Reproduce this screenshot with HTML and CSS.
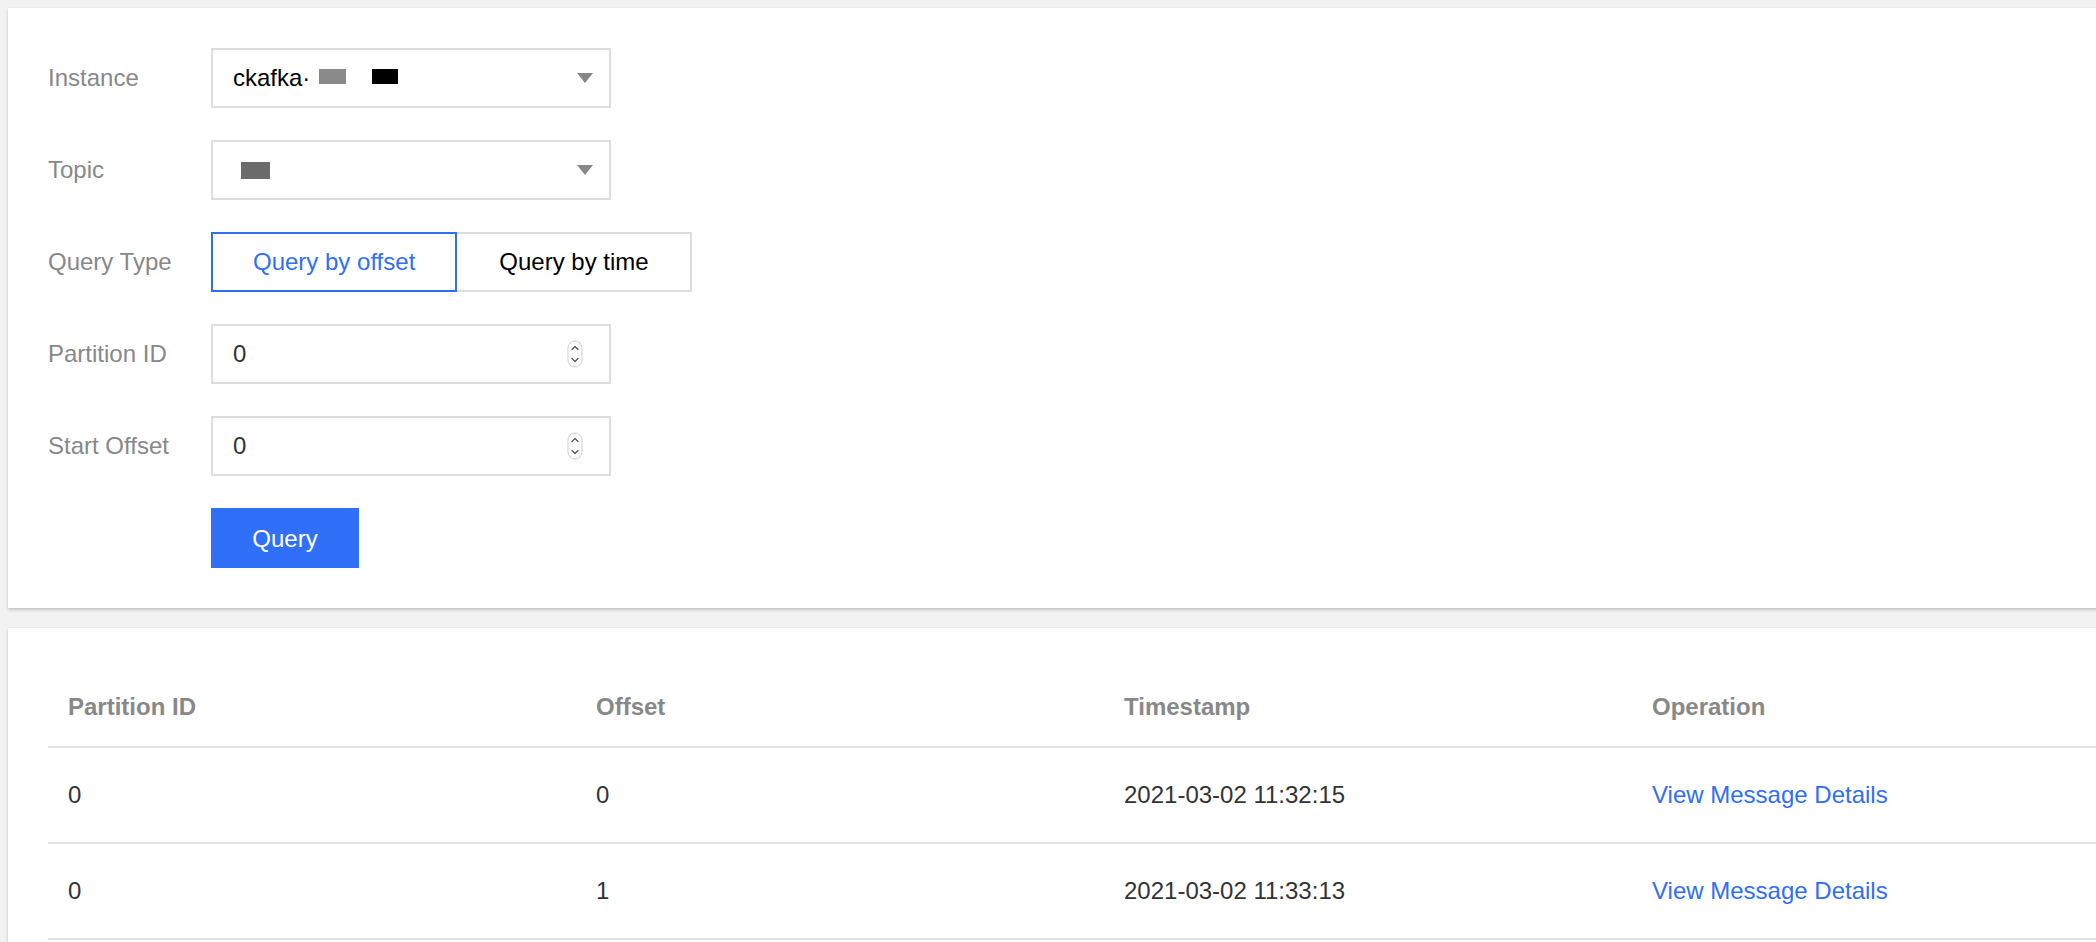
FILE: index.html
```html
<!DOCTYPE html>
<html lang="en">
<head>
<meta charset="utf-8">
<title>Message Query</title>
<link rel="stylesheet" href="styles.css">
</head>
<body>
<div class="page">
  <section class="card form-card">
    <div class="form-row">
      <span class="label">Instance</span>
      <div class="control select">
        <span class="value">ckafka·</span>
        <span class="mask mask-grey"></span>
        <span class="mask mask-black"></span>
        <svg class="caret" width="16" height="10" viewBox="0 0 16 10"><path d="M0 0H16L8 10Z" fill="#888"/></svg>
      </div>
    </div>
    <div class="form-row">
      <span class="label">Topic</span>
      <div class="control select">
        <span class="mask mask-topic"></span>
        <svg class="caret" width="16" height="10" viewBox="0 0 16 10"><path d="M0 0H16L8 10Z" fill="#888"/></svg>
      </div>
    </div>
    <div class="form-row">
      <span class="label">Query Type</span>
      <div class="seg">
        <button class="seg-btn active">Query by offset</button>
        <button class="seg-btn">Query by time</button>
      </div>
    </div>
    <div class="form-row">
      <span class="label">Partition ID</span>
      <div class="control number">
        <span class="value dark">0</span>
        <svg class="spin" width="16" height="28" viewBox="0 0 16 28"><rect x="1" y="1" width="14" height="26" rx="7" fill="#fff" stroke="#cfcfcf"/><path d="M5 9.5L8 6.5L11 9.5M5 18.5L8 21.5L11 18.5" fill="none" stroke="#555" stroke-width="1.3" stroke-linecap="round" stroke-linejoin="round"/></svg>
      </div>
    </div>
    <div class="form-row">
      <span class="label">Start Offset</span>
      <div class="control number">
        <span class="value dark">0</span>
        <svg class="spin" width="16" height="28" viewBox="0 0 16 28"><rect x="1" y="1" width="14" height="26" rx="7" fill="#fff" stroke="#cfcfcf"/><path d="M5 9.5L8 6.5L11 9.5M5 18.5L8 21.5L11 18.5" fill="none" stroke="#555" stroke-width="1.3" stroke-linecap="round" stroke-linejoin="round"/></svg>
      </div>
    </div>
    <div class="form-row">
      <span class="label"></span>
      <button class="primary">Query</button>
    </div>
  </section>

  <section class="card table-card">
    <div class="trow thead">
      <div class="cell">Partition ID</div>
      <div class="cell">Offset</div>
      <div class="cell">Timestamp</div>
      <div class="cell">Operation</div>
    </div>
    <div class="trow">
      <div class="cell">0</div>
      <div class="cell">0</div>
      <div class="cell">2021-03-02 11:32:15</div>
      <div class="cell"><a class="link" href="#">View Message Details</a></div>
    </div>
    <div class="trow">
      <div class="cell">0</div>
      <div class="cell">1</div>
      <div class="cell">2021-03-02 11:33:13</div>
      <div class="cell"><a class="link" href="#">View Message Details</a></div>
    </div>
  </section>
</div>
</body>
</html>
```

FILE: styles.css
```css
html, body {
  margin: 0;
  padding: 0;
  overflow: hidden;
  background: #f2f2f2;
}
body {
  font-family: "Liberation Sans", Arial, Helvetica, sans-serif;
  font-size: 24px;
  color: #333;
}
.page {
  padding: 8px;
  display: flex;
  flex-direction: column;
  gap: 20px;
  width: 2192px;
}
.card {
  background: #fff;
  box-shadow: 0 2px 3px rgba(0, 0, 0, 0.18), 0 0 2px rgba(0, 0, 0, 0.06);
  padding: 40px;
  box-sizing: border-box;
  width: 2192px;
}
.form-card {
  display: flex;
  flex-direction: column;
  gap: 32px;
}
.form-row {
  display: flex;
  align-items: center;
  height: 60px;
}
.label {
  width: 163px;
  flex: none;
  color: #888;
}
.control {
  width: 400px;
  height: 60px;
  box-sizing: border-box;
  border: 2px solid #ddd;
  display: flex;
  align-items: center;
  padding: 0 16px 0 20px;
  background: #fff;
}
.value {
  color: #000;
}
.value.dark {
  color: #333;
}
.caret {
  margin-left: auto;
}
.mask {
  display: inline-block;
  height: 15px;
  margin-bottom: 4px;
}
.mask-grey {
  width: 27px;
  background: #8a8a8a;
  margin-left: 9px;
}
.mask-black {
  width: 26px;
  background: #000;
  margin-left: 26px;
}
.mask-topic {
  width: 29px;
  height: 17px;
  margin-left: 8px;
  margin-bottom: 0;
  background: #6b6b6b;
}
.number {
  padding-right: 26px;
}
.spin {
  margin-left: auto;
}
.seg {
  display: flex;
  height: 60px;
}
.seg-btn {
  font: inherit;
  height: 60px;
  box-sizing: border-box;
  padding: 0 41px 0 42px;
  background: #fff;
  border: 2px solid #ddd;
  border-left: none;
  color: #000;
  margin: 0;
}
.seg-btn.active {
  padding: 0 40px;
  border: 2px solid #2f6ff6;
  color: #2f6ff6;
}
.primary {
  font: inherit;
  height: 60px;
  width: 148px;
  box-sizing: border-box;
  border: none;
  background: #306ff7;
  color: #fff;
  margin: 0;
  padding: 2px 0 0;
}
.table-card {
  padding-bottom: 40px;
}
.trow {
  display: grid;
  grid-template-columns: repeat(4, 528px);
  align-items: center;
  height: 96px;
  box-sizing: border-box;
  border-bottom: 2px solid #e3e3e3;
}
.trow.thead {
  height: 80px;
  font-weight: bold;
  color: #888;
}
.cell {
  padding-left: 20px;
}
.link {
  color: #2f6ff6;
  text-decoration: none;
}
```
